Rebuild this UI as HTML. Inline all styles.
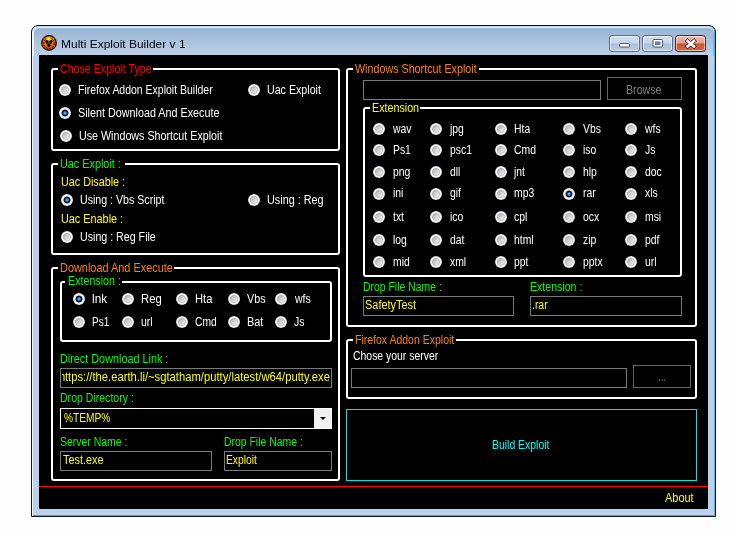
<!DOCTYPE html>
<html lang="en"><head><meta charset="utf-8"><title>Multi Exploit Builder v 1</title>
<style>
html,body{margin:0;padding:0}
body{width:736px;height:536px;background:#fefefe;position:relative;overflow:hidden;font-family:"Liberation Sans",sans-serif}
.win{position:absolute;left:31px;top:25px;width:683px;height:490px;border:1px solid #12161c;border-radius:7px 7px 0 0;background:#b9d1ea;box-shadow:inset 1px 0 0 rgba(255,255,255,.85),inset -1px 0 0 #46bdf0,inset 0 -1px 0 #4fa8cc}
.cap{position:absolute;left:1px;top:1px;width:681px;height:29px;border-radius:6px 6px 0 0;background:linear-gradient(#97b2d2,#a6bfdb 40%,#bcd2e9 100%);box-shadow:inset 0 1px 0 rgba(255,255,255,.8),inset 1px 0 0 rgba(255,255,255,.7),inset -1px 0 0 rgba(70,189,240,.8)}
.title{will-change:transform;position:absolute;left:61.5px;top:36px;font-size:12px;line-height:14px;color:#000;white-space:pre}
.client{position:absolute;left:39px;top:55px;width:669px;height:454px;background:#000}
.cb{position:absolute;top:35px;width:29px;height:15px;border:1px solid #5e6e86;border-radius:3px;background:linear-gradient(#d3e0ef 0,#c3d5ea 48%,#a9c1de 52%,#b7cde6 100%);box-shadow:inset 0 0 0 1px rgba(255,255,255,.55)}
.cb.x{background:linear-gradient(#efc0b4 0,#e39a88 48%,#c9532f 52%,#d4694a 100%);border-color:#4a2a24}
.layer{position:absolute;left:0;top:0;width:736px;height:536px;will-change:transform}
.t{position:absolute;font-size:12.5px;line-height:14px;white-space:pre;transform-origin:0 0}
.gb{position:absolute;border:2px solid #fff;border-radius:3px;box-sizing:border-box}
.clip{position:absolute;overflow:hidden}
.gap{position:absolute;height:4px;background:#000}
.in{position:absolute;box-sizing:border-box;border:1px solid #7a7a7a;background:#000}
.r{position:absolute;width:12px;height:12px;border-radius:50%;background:radial-gradient(circle at 50% 50%,rgba(0,0,0,0) 0,rgba(0,0,0,0) 2.7px,rgba(150,154,160,.45) 3.5px,#f0f0f0 4.3px,#fafafa 5.2px,#bdbdbd 6px),linear-gradient(135deg,#b0b5ba 25%,#f5f5f5 78%)}
.r.on{background:radial-gradient(circle at 50% 50%,#8fd6ff 0,#2a98ec 1px,#165fa6 1.7px,#08121f 2.3px,#141f30 3.1px,#d4dae2 3.8px,#f2f2f2 4.4px,#fafafa 5.2px,#bdbdbd 6px)}
.btn{position:absolute;box-sizing:border-box;border:1px solid #646464;background:#000}
.red{position:absolute;left:39px;top:486px;width:669px;height:1px;background:#ff0000}
.build{position:absolute;left:346px;top:409px;width:351px;height:72px;box-sizing:border-box;border:1px solid #00e5e5;background:#000}
.combo{position:absolute;left:60px;top:408px;width:272px;height:21px;box-sizing:border-box;border:1px solid #fff;background:#000}
.dd{position:absolute;left:314px;top:409px;width:17px;height:19px;background:#f0f0f0}
.dd:after{content:"";position:absolute;left:6px;top:8px;border:3.5px solid transparent;border-top:3.5px solid #000;border-bottom:0}
</style></head><body>
<div class="win"><div class="cap"></div></div>

<svg style="position:absolute;left:41px;top:35px" width="16" height="16" viewBox="0 0 16 16">
<defs><radialGradient id="ig" cx="50%" cy="40%" r="60%"><stop offset="0" stop-color="#f89020"/><stop offset=".6" stop-color="#e06c10"/><stop offset="1" stop-color="#98400a"/></radialGradient></defs>
<circle cx="8" cy="8" r="7.3" fill="url(#ig)" stroke="#1c0e06" stroke-width="1.3"/>
<circle cx="8" cy="8.4" r="5.2" fill="none" stroke="#1a0c04" stroke-width="1" stroke-dasharray="1.6 1.5"/>
<ellipse cx="5.8" cy="6.6" rx="1.5" ry="1.7" fill="#140a04"/><ellipse cx="10" cy="6.6" rx="1.5" ry="1.7" fill="#140a04"/>
<ellipse cx="7.9" cy="10.2" rx="1.5" ry="1.9" fill="#0c0604"/>
<path d="M5.4 8.3 L7.2 9.4 M10.4 8.3 L8.6 9.4 M7.9 6.2 L7.9 8.4" stroke="#1a0c04" stroke-width="1.1"/>
<ellipse cx="7.8" cy="2.9" rx="1.8" ry=".9" fill="#f6c8b0"/>
<path d="M5.6 4.6 L6.5 3.6 L7.3 4.6 L8.1 3.6 L8.9 4.6 L9.8 3.7" stroke="#fff200" stroke-width="1.1" fill="none"/>
<circle cx="3.6" cy="11.3" r=".95" fill="#ff1808"/><circle cx="7.5" cy="13.1" r=".95" fill="#ff1808"/><circle cx="11.5" cy="11.3" r=".95" fill="#ff1808"/>
</svg>
<div class="cb" style="left:609px"><svg width="29" height="15" style="position:absolute;left:0;top:0"><rect x="9.5" y="7.5" width="10" height="3.5" rx="1" fill="#fff" stroke="#4a5568" stroke-width="1"/></svg></div>
<div class="cb" style="left:642px"><svg width="29" height="15" style="position:absolute;left:0;top:0"><rect x="10" y="3.5" width="9.5" height="7.5" rx="1" fill="#fff" stroke="#4a5568" stroke-width="1"/><rect x="12.5" y="6" width="4.5" height="2.5" fill="#6f9cc4" stroke="#4a5568" stroke-width=".8"/></svg></div>
<div class="cb x" style="left:675px"><svg width="29" height="15" style="position:absolute;left:0;top:0"><path d="M11.5 5 L18 10.5 M18 5 L11.5 10.5" stroke="#4a3a38" stroke-width="4.2" stroke-linecap="square"/><path d="M11.5 5 L18 10.5 M18 5 L11.5 10.5" stroke="#fff" stroke-width="2.4" stroke-linecap="square"/></svg></div>
<div class="client"></div>

<div class="gb" style="left:51px;top:68px;width:289px;height:83px"></div>
<div class="gap" style="left:58px;top:67px;width:95px"></div>
<div class="gb" style="left:51px;top:163px;width:289px;height:92px"></div>
<div class="gap" style="left:58px;top:162px;width:67px"></div>
<div class="gb" style="left:51px;top:267px;width:289px;height:214px"></div>
<div class="gap" style="left:58px;top:266px;width:116px"></div>
<div class="gb" style="left:60px;top:281px;width:272px;height:61px"></div>
<div class="gap" style="left:65px;top:280px;width:57px"></div>
<div class="gb" style="left:346px;top:68px;width:351px;height:259px"></div>
<div class="gap" style="left:353px;top:67px;width:126px"></div>
<div class="gb" style="left:363px;top:107px;width:319px;height:170px"></div>
<div class="gap" style="left:370px;top:106px;width:50px"></div>
<div class="gb" style="left:346px;top:339px;width:351px;height:60px"></div>
<div class="gap" style="left:353px;top:338px;width:103px"></div>
<div class="in" style="left:60px;top:368px;width:272px;height:20px;border-color:#7a7a7a"></div>
<div class="in" style="left:60px;top:451px;width:152px;height:20px;border-color:#7a7a7a"></div>
<div class="in" style="left:224px;top:451px;width:108px;height:20px;border-color:#7a7a7a"></div>
<div class="in" style="left:363px;top:80px;width:238px;height:20px;border-color:#7a7a7a"></div>
<div class="in" style="left:363px;top:296px;width:151px;height:20px;border-color:#7a7a7a"></div>
<div class="in" style="left:530px;top:296px;width:152px;height:20px;border-color:#7a7a7a"></div>
<div class="in" style="left:351px;top:368px;width:276px;height:20px;border-color:#7a7a7a"></div>
<div class="combo"></div><div class="dd"></div>
<div class="btn" style="left:607px;top:77px;width:75px;height:23px"></div>
<div class="btn" style="left:633px;top:365px;width:58px;height:23px"></div>
<div class="build"></div><div class="red"></div>
<i class="r" style="left:59px;top:84px"></i>
<i class="r on" style="left:59px;top:107px"></i>
<i class="r" style="left:59.5px;top:130px"></i>
<i class="r" style="left:248px;top:84px"></i>
<i class="r on" style="left:60.5px;top:194px"></i>
<i class="r" style="left:248px;top:194px"></i>
<i class="r" style="left:60.5px;top:231px"></i>
<i class="r on" style="left:73px;top:293px"></i>
<i class="r" style="left:73px;top:315.5px"></i>
<i class="r" style="left:122px;top:293px"></i>
<i class="r" style="left:122px;top:315.5px"></i>
<i class="r" style="left:176px;top:293px"></i>
<i class="r" style="left:176px;top:315.5px"></i>
<i class="r" style="left:228px;top:293px"></i>
<i class="r" style="left:228px;top:315.5px"></i>
<i class="r" style="left:275px;top:293px"></i>
<i class="r" style="left:275px;top:315.5px"></i>
<i class="r" style="left:373px;top:123.30000000000001px"></i>
<i class="r" style="left:430px;top:123.30000000000001px"></i>
<i class="r" style="left:494.5px;top:123.30000000000001px"></i>
<i class="r" style="left:563px;top:123.30000000000001px"></i>
<i class="r" style="left:625.3px;top:123.30000000000001px"></i>
<i class="r" style="left:373px;top:144.2px"></i>
<i class="r" style="left:430px;top:144.2px"></i>
<i class="r" style="left:494.5px;top:144.2px"></i>
<i class="r" style="left:563px;top:144.2px"></i>
<i class="r" style="left:625.3px;top:144.2px"></i>
<i class="r" style="left:373px;top:166px"></i>
<i class="r" style="left:430px;top:166px"></i>
<i class="r" style="left:494.5px;top:166px"></i>
<i class="r" style="left:563px;top:166px"></i>
<i class="r" style="left:625.3px;top:166px"></i>
<i class="r" style="left:373px;top:188px"></i>
<i class="r" style="left:430px;top:188px"></i>
<i class="r" style="left:494.5px;top:188px"></i>
<i class="r on" style="left:563px;top:188px"></i>
<i class="r" style="left:625.3px;top:188px"></i>
<i class="r" style="left:373px;top:211px"></i>
<i class="r" style="left:430px;top:211px"></i>
<i class="r" style="left:494.5px;top:211px"></i>
<i class="r" style="left:563px;top:211px"></i>
<i class="r" style="left:625.3px;top:211px"></i>
<i class="r" style="left:373px;top:233.7px"></i>
<i class="r" style="left:430px;top:233.7px"></i>
<i class="r" style="left:494.5px;top:233.7px"></i>
<i class="r" style="left:563px;top:233.7px"></i>
<i class="r" style="left:625.3px;top:233.7px"></i>
<i class="r" style="left:373px;top:256.2px"></i>
<i class="r" style="left:430px;top:256.2px"></i>
<i class="r" style="left:494.5px;top:256.2px"></i>
<i class="r" style="left:563px;top:256.2px"></i>
<i class="r" style="left:625.3px;top:256.2px"></i>
<div class="layer">
<span class="t" style="left:60.07px;top:61.67px;color:#ff0000;transform:scaleX(0.8523)">Chose Exploit Type</span>
<span class="t" style="left:77.84px;top:82.67px;color:#ffffff;transform:scaleX(0.8388)">Firefox Addon Exploit Builder</span>
<span class="t" style="left:78.01px;top:105.67px;color:#ffffff;transform:scaleX(0.8626)">Silent Download And Execute</span>
<span class="t" style="left:78.68px;top:128.67px;color:#ffffff;transform:scaleX(0.8565)">Use Windows Shortcut Exploit</span>
<span class="t" style="left:266.98px;top:82.67px;color:#ffffff;transform:scaleX(0.8524)">Uac Exploit</span>
<span class="t" style="left:60.17px;top:156.67px;color:#00ff00;transform:scaleX(0.8669)">Uac Exploit :</span>
<span class="t" style="left:61.07px;top:174.67px;color:#ffff00;transform:scaleX(0.8624)">Uac Disable :</span>
<span class="t" style="left:79.68px;top:192.67px;color:#ffffff;transform:scaleX(0.8495)">Using : Vbs Script</span>
<span class="t" style="left:266.97px;top:192.67px;color:#ffffff;transform:scaleX(0.8656)">Using : Reg</span>
<span class="t" style="left:61.06px;top:211.67px;color:#ffff00;transform:scaleX(0.8679)">Uac Enable :</span>
<span class="t" style="left:79.68px;top:229.67px;color:#ffffff;transform:scaleX(0.8523)">Using : Reg File</span>
<span class="t" style="left:59.6px;top:260.67px;color:#ff8000;transform:scaleX(0.8733)">Download And Execute</span>
<span class="t" style="left:67.62px;top:274.27px;color:#00ff00;transform:scaleX(0.8546)">Extension :</span>
<span class="t" style="left:91.7px;top:291.67px;color:#ffffff;transform:scaleX(0.9497)">lnk</span>
<span class="t" style="left:91.68px;top:314.67px;color:#ffffff;transform:scaleX(0.7985)">Ps1</span>
<span class="t" style="left:140.57px;top:291.67px;color:#ffffff;transform:scaleX(0.9052)">Reg</span>
<span class="t" style="left:140.83px;top:314.67px;color:#ffffff;transform:scaleX(0.8400)">url</span>
<span class="t" style="left:194.83px;top:291.67px;color:#ffffff;transform:scaleX(0.8949)">Hta</span>
<span class="t" style="left:195.24px;top:314.67px;color:#ffffff;transform:scaleX(0.8212)">Cmd</span>
<span class="t" style="left:246.96px;top:291.67px;color:#ffffff;transform:scaleX(0.8604)">Vbs</span>
<span class="t" style="left:246.86px;top:314.67px;color:#ffffff;transform:scaleX(0.8725)">Bat</span>
<span class="t" style="left:294.77px;top:291.67px;color:#ffffff;transform:scaleX(0.8404)">wfs</span>
<span class="t" style="left:293.84px;top:314.67px;color:#ffffff;transform:scaleX(0.8346)">Js</span>
<span class="t" style="left:59.61px;top:351.67px;color:#00ff00;transform:scaleX(0.8666)">Direct Download Link :</span>
<span class="t" style="left:59.64px;top:390.67px;color:#00ff00;transform:scaleX(0.8435)">Drop Directory :</span>
<span class="t" style="left:63.55px;top:410.67px;color:#ffff00;transform:scaleX(0.8114)">%TEMP%</span>
<span class="t" style="left:60.03px;top:434.67px;color:#00ff00;transform:scaleX(0.8366)">Server Name :</span>
<span class="t" style="left:62.96px;top:453.07px;color:#ffff00;transform:scaleX(0.8704)">Test.exe</span>
<span class="t" style="left:223.65px;top:434.67px;color:#00ff00;transform:scaleX(0.8341)">Drop File Name :</span>
<span class="t" style="left:226.16px;top:453.07px;color:#ffff00;transform:scaleX(0.8239)">Exploit</span>
<span class="t" style="left:355.46px;top:61.67px;color:#ff8000;transform:scaleX(0.8581)">Windows Shortcut Exploit</span>
<span class="t" style="left:371.62px;top:101.17px;color:#ffff00;transform:scaleX(0.8575)">Extension</span>
<span class="t" style="left:392.8px;top:121.67px;color:#ffffff;transform:scaleX(0.8300)">wav</span>
<span class="t" style="left:450.1px;top:121.67px;color:#ffffff;transform:scaleX(0.8300)">jpg</span>
<span class="t" style="left:513.8px;top:121.67px;color:#ffffff;transform:scaleX(0.8300)">Hta</span>
<span class="t" style="left:582.7px;top:121.67px;color:#ffffff;transform:scaleX(0.8300)">Vbs</span>
<span class="t" style="left:644.9px;top:121.67px;color:#ffffff;transform:scaleX(0.8300)">wfs</span>
<span class="t" style="left:392.8px;top:142.97px;color:#ffffff;transform:scaleX(0.8300)">Ps1</span>
<span class="t" style="left:450.1px;top:142.97px;color:#ffffff;transform:scaleX(0.8300)">psc1</span>
<span class="t" style="left:513.8px;top:142.97px;color:#ffffff;transform:scaleX(0.8300)">Cmd</span>
<span class="t" style="left:582.7px;top:142.97px;color:#ffffff;transform:scaleX(0.8300)">iso</span>
<span class="t" style="left:644.9px;top:142.97px;color:#ffffff;transform:scaleX(0.8300)">Js</span>
<span class="t" style="left:392.8px;top:164.67px;color:#ffffff;transform:scaleX(0.8300)">png</span>
<span class="t" style="left:450.1px;top:164.67px;color:#ffffff;transform:scaleX(0.8300)">dll</span>
<span class="t" style="left:513.8px;top:164.67px;color:#ffffff;transform:scaleX(0.8300)">jnt</span>
<span class="t" style="left:582.7px;top:164.67px;color:#ffffff;transform:scaleX(0.8300)">hlp</span>
<span class="t" style="left:644.9px;top:164.67px;color:#ffffff;transform:scaleX(0.8300)">doc</span>
<span class="t" style="left:392.8px;top:186.27px;color:#ffffff;transform:scaleX(0.8300)">ini</span>
<span class="t" style="left:450.1px;top:186.27px;color:#ffffff;transform:scaleX(0.8300)">gif</span>
<span class="t" style="left:513.8px;top:186.27px;color:#ffffff;transform:scaleX(0.8300)">mp3</span>
<span class="t" style="left:582.7px;top:186.27px;color:#ffffff;transform:scaleX(0.8300)">rar</span>
<span class="t" style="left:644.9px;top:186.27px;color:#ffffff;transform:scaleX(0.8300)">xls</span>
<span class="t" style="left:392.8px;top:209.67px;color:#ffffff;transform:scaleX(0.8300)">txt</span>
<span class="t" style="left:450.1px;top:209.67px;color:#ffffff;transform:scaleX(0.8300)">ico</span>
<span class="t" style="left:513.8px;top:209.67px;color:#ffffff;transform:scaleX(0.8300)">cpl</span>
<span class="t" style="left:582.7px;top:209.67px;color:#ffffff;transform:scaleX(0.8300)">ocx</span>
<span class="t" style="left:644.9px;top:209.67px;color:#ffffff;transform:scaleX(0.8300)">msi</span>
<span class="t" style="left:392.8px;top:232.67px;color:#ffffff;transform:scaleX(0.8300)">log</span>
<span class="t" style="left:450.1px;top:232.67px;color:#ffffff;transform:scaleX(0.8300)">dat</span>
<span class="t" style="left:513.8px;top:232.67px;color:#ffffff;transform:scaleX(0.8300)">html</span>
<span class="t" style="left:582.7px;top:232.67px;color:#ffffff;transform:scaleX(0.8300)">zip</span>
<span class="t" style="left:644.9px;top:232.67px;color:#ffffff;transform:scaleX(0.8300)">pdf</span>
<span class="t" style="left:392.8px;top:254.87px;color:#ffffff;transform:scaleX(0.8300)">mid</span>
<span class="t" style="left:450.1px;top:254.87px;color:#ffffff;transform:scaleX(0.8300)">xml</span>
<span class="t" style="left:513.8px;top:254.87px;color:#ffffff;transform:scaleX(0.8300)">ppt</span>
<span class="t" style="left:582.7px;top:254.87px;color:#ffffff;transform:scaleX(0.8300)">pptx</span>
<span class="t" style="left:644.9px;top:254.87px;color:#ffffff;transform:scaleX(0.8300)">url</span>
<span class="t" style="left:362.9px;top:279.67px;color:#00ff00;transform:scaleX(0.8341)">Drop File Name :</span>
<span class="t" style="left:529.88px;top:279.67px;color:#00ff00;transform:scaleX(0.8463)">Extension :</span>
<span class="t" style="left:365.01px;top:297.87px;color:#ffff00;transform:scaleX(0.8750)">SafetyTest</span>
<span class="t" style="left:532.05px;top:297.87px;color:#ffff00;transform:scaleX(0.8327)">.rar</span>
<span class="t" style="left:354.64px;top:332.67px;color:#ff8000;transform:scaleX(0.8401)">Firefox Addon Exploit</span>
<span class="t" style="left:353.48px;top:348.67px;color:#ffffff;transform:scaleX(0.8342)">Chose your server</span>
<span class="t" style="left:60.62px;top:36.98px;font-size:11.6px;color:#000;transform:scaleX(1.0340)">Multi Exploit Builder v 1</span>
<span class="t" style="left:491.64px;top:437.67px;color:#00ffff;transform:scaleX(0.8349)">Build Exploit</span>
<span class="t" style="left:664.98px;top:490.67px;color:#ffff00;transform:scaleX(0.8756)">About</span>
<span class="t" style="left:625.73px;top:82.67px;color:#808080;transform:scaleX(0.8529)">Browse</span>
<span class="t" style="left:658.08px;top:369.67px;color:#808080;transform:scaleX(0.8098)">...</span>
<div class="clip" style="left:62px;top:369px;width:269px;height:18px"><span class="t" style="left:-2.92px;top:0.67px;color:#ffff00;transform:scaleX(0.8988)">h</span><span class="t" style="left:3.33px;top:0.67px;color:#ffff00;transform:scaleX(0.8988)">ttps://the.earth.li/~sgtatham/putty/latest/w64/putty.exe</span></div>
</div>
</body></html>
